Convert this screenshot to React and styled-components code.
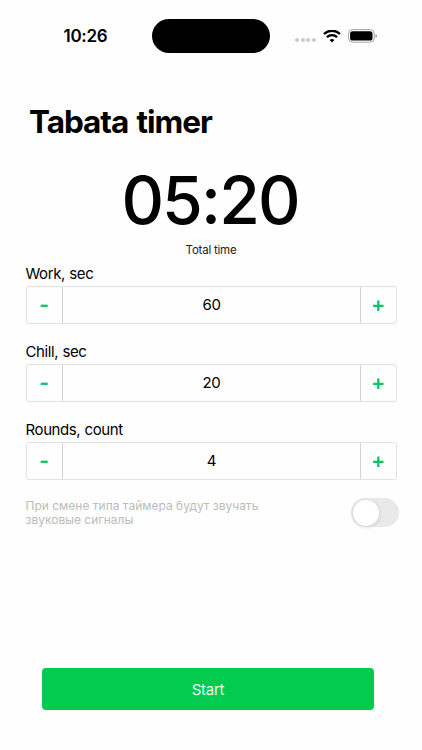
import React, { useState } from "react";
import styled, { createGlobalStyle } from "styled-components";

const GlobalStyle = createGlobalStyle`
  * {
    box-sizing: border-box;
  }

  body {
    margin: 0;
    background: #fefefe;
    font-family: Inter, "Liberation Sans", sans-serif;
    color: #000;
  }

  button {
    font-family: inherit;
    padding: 0;
    border: none;
    background: none;
    cursor: pointer;
  }
`;

function Counter({ label, value, onChange }) {
  return (
    <Field>
      <Label>{label}</Label>
      <CounterBox>
        <CounterButton onClick={() => onChange(Math.max(0, value - 1))}>
          <CounterIcon width="13" height="12" viewBox="0 0 13 12">
            <path d="M2.7 6.8h7" />
          </CounterIcon>
        </CounterButton>
        <CounterValue>{value}</CounterValue>
        <CounterButton onClick={() => onChange(value + 1)}>
          <CounterIcon width="13" height="12" viewBox="0 0 13 12">
            <path d="M1.1 6.8h10.4M6.3 1.6v10.4" />
          </CounterIcon>
        </CounterButton>
      </CounterBox>
    </Field>
  );
}

function App() {
  const [work, setWork] = useState(60);
  const [chill, setChill] = useState(20);
  const [rounds, setRounds] = useState(4);
  const [sound, setSound] = useState(false);

  const total = (work + chill) * rounds;
  const minutes = String(Math.floor(total / 60)).padStart(2, "0");
  const seconds = String(total % 60).padStart(2, "0");

  return (
    <Screen>
      <GlobalStyle />
      <StatusBar>
        <Clock>10:26</Clock>
        <Island />
        <StatusIcons>
          <Dots>
            <Dot />
            <Dot />
            <Dot />
            <Dot />
          </Dots>
          <svg width="18" height="13" viewBox="0 0 18 13" fill="none" stroke="#000">
            <path d="M1 4a11.6 11.6 0 0 1 16 0" strokeWidth="2.4" />
            <path d="M3.9 7.1a7.4 7.4 0 0 1 10.2 0" strokeWidth="2.3" />
            <path d="M9 12.6 6.6 10.1a3.5 3.5 0 0 1 4.8 0z" fill="#000" stroke="none" />
          </svg>
          <svg width="30" height="14" viewBox="0 0 30 14">
            <rect x=".6" y=".6" width="25.6" height="12.6" rx="4" fill="none" stroke="#a5a5a5" />
            <rect x="2.1" y="2.2" width="22.4" height="9.4" rx="2.6" />
            <path d="M27.5 5v4c.8-.3 1.4-1.1 1.4-2s-.6-1.7-1.4-2z" fill="#999" />
          </svg>
        </StatusIcons>
      </StatusBar>
      <Title>Tabata timer</Title>
      <Time>
        {minutes}:{seconds}
      </Time>
      <TimeCaption>Total time</TimeCaption>
      <Form>
        <Counter label="Work, sec" value={work} onChange={setWork} />
        <Counter label="Chill, sec" value={chill} onChange={setChill} />
        <Counter label="Rounds, count" value={rounds} onChange={setRounds} />
        <SoundRow>
          <SoundText>При смене типа таймера будут звучать звуковые сигналы</SoundText>
          <Switch $on={sound} onClick={() => setSound(!sound)}>
            <Knob />
          </Switch>
        </SoundRow>
      </Form>
      <StartButton>Start</StartButton>
    </Screen>
  );
}

export default App;

const Screen = styled.div`
  width: 422px;
  height: 750px;
  display: flex;
  flex-direction: column;
  overflow: hidden;
`;

const StatusBar = styled.div`
  height: 72px;
  display: grid;
  grid-template-columns: 152px 118px 1fr;
  align-items: center;
  flex-shrink: 0;
`;

const Clock = styled.div`
  padding-left: 63.5px;
  font-size: 17px;
  font-weight: 600;
  line-height: 20px;
  letter-spacing: -0.3px;
`;

const Island = styled.div`
  height: 34px;
  border-radius: 17px;
  background: #000;
`;

const StatusIcons = styled.div`
  display: flex;
  align-items: center;
  padding-left: 25px;

  svg + svg {
    margin-left: 7px;
  }
`;

const Dots = styled.div`
  display: flex;
  gap: 1.6px;
  margin-top: 8px;
  margin-right: 7px;
`;

const Dot = styled.span`
  width: 4px;
  height: 4px;
  border-radius: 50%;
  background: #ccc;
`;

const Title = styled.h1`
  margin: 30px 0 0 29px;
  font-size: 31.5px;
  font-weight: 700;
  line-height: 40px;
  letter-spacing: -1.05px;
  word-spacing: 2px;
`;

const Time = styled.div`
  margin-top: 18px;
  padding-right: 2px;
  font-size: 66px;
  font-weight: 500;
  line-height: 80px;
  letter-spacing: -1.9px;
  text-align: center;
`;

const TimeCaption = styled.div`
  margin-top: 3px;
  font-size: 11.5px;
  line-height: 14px;
  letter-spacing: -0.22px;
  text-align: center;
  color: #222;
`;

const Form = styled.div`
  display: flex;
  flex-direction: column;
  padding: 8px 23px 0 26px;
`;

const Field = styled.div`
  height: 78px;
`;

const Label = styled.div`
  margin: 0 0 3px -0.5px;
  font-size: 15px;
  line-height: 18px;
  letter-spacing: -0.4px;
  word-spacing: 0.5px;
`;

const CounterBox = styled.div`
  display: grid;
  grid-template-columns: 35px 1fr 35px;
  width: 371px;
  height: 38px;
  border: 1px solid #e2e2e2;
  border-radius: 3px;
`;

const CounterButton = styled.button`
  display: flex;
  align-items: center;
  justify-content: center;
`;

const CounterIcon = styled.svg`
  fill: none;
  stroke: #0dc463;
  stroke-width: 2.3;
`;

const CounterValue = styled.div`
  border: solid #d4d4d4;
  border-width: 0 1px;
  font-size: 15px;
  line-height: 36px;
  letter-spacing: -0.3px;
  text-align: center;
`;

const SoundRow = styled.div`
  display: flex;
  align-items: center;
  justify-content: space-between;
  height: 29px;
  margin-top: -1px;
`;

const SoundText = styled.div`
  width: 260px;
  margin-left: -0.5px;
  font-size: 12px;
  line-height: 14px;
  color: #bcbcbc;
`;

const Switch = styled.button`
  display: flex;
  align-items: center;
  justify-content: ${(props) => (props.$on ? "flex-end" : "flex-start")};
  width: 48px;
  height: 29px;
  padding: 0 1.5px;
  border-radius: 15px;
  background: ${(props) => (props.$on ? "#02cb50" : "#e9e9eb")};
`;

const Knob = styled.span`
  width: 26px;
  height: 26px;
  border-radius: 50%;
  background: #fff;
  box-shadow: 0 1px 4px rgba(0, 0, 0, 0.14);
`;

const StartButton = styled.button`
  width: 332px;
  height: 42px;
  margin: auto 0 40px 42px;
  flex-shrink: 0;
  border-radius: 4px;
  background: #02cb50;
  color: #e9fbef;
  font-size: 15px;
  letter-spacing: -0.25px;
`;
